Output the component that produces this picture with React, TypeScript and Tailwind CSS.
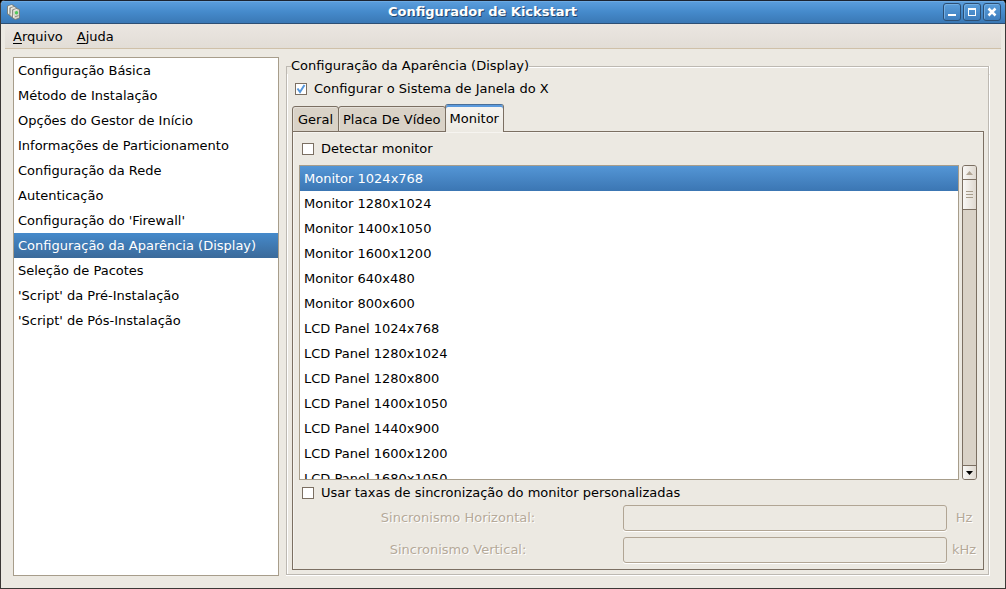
import { useState } from "react";
import type { ReactNode } from "react";

const sections = [
  "Configuração Básica",
  "Método de Instalação",
  "Opções do Gestor de Início",
  "Informações de Particionamento",
  "Configuração da Rede",
  "Autenticação",
  "Configuração do 'Firewall'",
  "Configuração da Aparência (Display)",
  "Seleção de Pacotes",
  "'Script' da Pré-Instalação",
  "'Script' de Pós-Instalação",
];

const monitors = [
  "Monitor 1024x768",
  "Monitor 1280x1024",
  "Monitor 1400x1050",
  "Monitor 1600x1200",
  "Monitor 640x480",
  "Monitor 800x600",
  "LCD Panel 1024x768",
  "LCD Panel 1280x1024",
  "LCD Panel 1280x800",
  "LCD Panel 1400x1050",
  "LCD Panel 1440x900",
  "LCD Panel 1600x1200",
  "LCD Panel 1680x1050",
];

function AppIcon() {
  return (
    <svg width="16" height="16" viewBox="0 0 16 16" className="shrink-0" aria-hidden="true">
      <g stroke="#75756c" strokeWidth="0.8" fill="#d6d6cc">
        <path d="M1.5 2l4.5-1.3 2 1v8.5l-4 1.3-2.5-1.5z" />
        <path d="M4 4l4.5-1.3 2 1v8.5L6.500 13.500 4 12z" />
        <path d="M6.500 6l4.500-1.500 2.500 1v8.500l-4.200 1.500L6.500 14z" />
      </g>
      <path d="M2.500 2.800v6.500M5 5v6M7.500 7v6M2.500 2.500L6 1.500M5 4.500l3.500-1M7.500 6.500l3.500-1" stroke="#f6f6ee" strokeWidth="0.9" />
      <path d="M4.500 3.500v6M7 5.500v6" stroke="#9a9a90" strokeWidth="0.7" />
      <circle cx="10.500" cy="8.800" r="1.700" fill="#52c85a" />
      <path d="M9 12.800l3.500-1.200" stroke="#8c8c82" />
    </svg>
  );
}

function TitleButton({ label, children }: { label: string; children: ReactNode }) {
  return (
    <button
      type="button"
      aria-label={label}
      className="flex size-[18px] items-center justify-center rounded-[3px] border border-[#2d4f74] bg-linear-to-b from-[#5b9edb] to-[#3d7dbd] shadow-[inset_1px_1px_0_#72aee4]"
    >
      <svg width="10" height="10" viewBox="0 0 10 10" fill="none" stroke="#fff" strokeWidth="2">
        {children}
      </svg>
    </button>
  );
}

function Check({
  id,
  label,
  checked,
  onChange,
}: {
  id: string;
  label: string;
  checked: boolean;
  onChange: (value: boolean) => void;
}) {
  return (
    <div className="flex items-center gap-[7px]">
      <span className="grid size-[12px]">
        <input
          id={id}
          type="checkbox"
          checked={checked}
          onChange={(e) => onChange(e.target.checked)}
          className="col-start-1 row-start-1 size-[12px] appearance-none border border-[#7b6f62] bg-white"
        />
        {checked && (
          <svg
            viewBox="0 0 12 12"
            className="pointer-events-none col-start-1 row-start-1 size-[12px]"
            fill="none"
            stroke="#5697db"
            strokeWidth="2"
          >
            <path d="M2.5 5.5l2.5 3.5 4.5-7" />
          </svg>
        )}
      </span>
      <label htmlFor={id}>{label}</label>
    </div>
  );
}

function RateRow({ id, label, unit }: { id: string; label: string; unit: string }) {
  return (
    <div className="flex h-[26px] items-center text-[#b5a999] [text-shadow:1px_1px_0_#fff]">
      <label htmlFor={id} className="flex-1 text-center">
        {label}
      </label>
      <input
        id={id}
        type="text"
        disabled
        className="ml-[6px] h-full w-[324px] rounded-[3px] border border-[#b1a594] bg-[#ece9e2] px-1 shadow-[0_1px_0_#fff]"
      />
      <span className="ml-[4px] w-[26px] text-center">{unit}</span>
    </div>
  );
}

export default function App() {
  const [section, setSection] = useState(sections[7]);
  const [monitor, setMonitor] = useState(monitors[0]);
  const [tab, setTab] = useState("Monitor");
  const [useX, setUseX] = useState(true);
  const [probe, setProbe] = useState(false);
  const [custom, setCustom] = useState(false);

  return (
    <div className="h-screen bg-black font-['DejaVu_Sans',sans-serif] text-[13px] leading-[16px] text-black">
      <div className="flex h-full flex-col overflow-hidden rounded-t-[5px] border border-t-0 border-[#3c3836] bg-[#ece9e2]">
        <header className="flex h-[24px] shrink-0 items-center border-t border-b border-t-[#1b2330] border-b-[#2d4f74] bg-linear-to-b from-[#5b9edd] via-[#458acb] to-[#3a78b5] pr-[4px] pl-[5px] shadow-[inset_0_1px_0_#6ca9e2]">
          <AppIcon />
          <h1 className="flex-1 text-center leading-[18px] font-bold text-white [text-shadow:1px_1px_0_#24476c]">
            Configurador de Kickstart
          </h1>
          <div className="flex gap-[2px]">
            <TitleButton label="Minimizar">
              <path d="M1 8h8" />
            </TitleButton>
            <TitleButton label="Maximizar">
              <path d="M1 2h8" />
              <path d="M1.5 1v8M8.5 1v8M1 8.5h8" strokeWidth="1" />
            </TitleButton>
            <TitleButton label="Fechar">
              <path d="M1.5 1.5l7 7M8.5 1.5l-7 7" strokeWidth="2.5" />
            </TitleButton>
          </div>
        </header>

        <nav className="mx-[4px] flex h-[25px] shrink-0 items-center gap-[14px] border-b border-[#cfc0a8] bg-linear-to-b from-[#ebe6e1] to-[#e2ddd6] px-[8px] pt-[2px]">
          <button type="button">
            <span className="underline underline-offset-2">A</span>rquivo
          </button>
          <button type="button">
            <span className="underline underline-offset-2">A</span>juda
          </button>
        </nav>

        <div className="flex min-h-0 flex-1 gap-[7px] pt-[8px] pr-[16px] pb-[12px] pl-[12px]">
          <ul className="w-[266px] shrink-0 border border-[#a79d8b] bg-white">
            {sections.map((name) => (
              <li key={name}>
                <button
                  type="button"
                  onClick={() => setSection(name)}
                  className={
                    "block h-[25px] w-full px-[4px] text-left whitespace-nowrap " +
                    (name === section ? "bg-linear-to-b from-[#458acb] to-[#3b6a9a] text-white" : "")
                  }
                >
                  {name}
                </button>
              </li>
            ))}
          </ul>

          <fieldset className="mb-px flex min-w-0 flex-1 flex-col">
            <div className="flex h-[17px] shrink-0 items-end">
              <div className="h-[8px] w-[5px] border-t border-l border-[#bdb9b2]" />
              <div className="h-[16px]">Configuração da Aparência (Display)</div>
              <div className="h-[8px] flex-1 border-t border-r border-[#bdb9b2] shadow-[inset_0_1px_0_#fff,1px_0_0_#fff]" />
            </div>
            <div className="flex min-h-0 flex-1 flex-col border border-t-0 border-[#bdb9b2] pt-[7px] pr-[4px] pb-[4px] pl-[5px] shadow-[inset_1px_0_0_#fff,0_1px_0_#fff,1px_1px_0_#fff]">
              <div className="pl-[3px]">
                <Check id="use-x" label="Configurar o Sistema de Janela do X" checked={useX} onChange={setUseX} />
              </div>

              <div role="tablist" className="z-10 mt-[7px] -mb-px flex h-[28px] shrink-0 items-end">
                {["Geral", "Placa De Vídeo", "Monitor"].map((name) => (
                  <button
                    key={name}
                    type="button"
                    role="tab"
                    aria-selected={name === tab}
                    onClick={() => setTab(name)}
                    className={
                      name === tab
                        ? "h-[28px] rounded-t-[3px] border border-b-0 border-[#7b6f62] border-t-[#4a6f98] bg-linear-to-b from-[#f7f6f3] to-[#ece9e2] px-[4px] shadow-[inset_0_2px_0_#5b9add]"
                        : "-mr-px h-[26px] rounded-t-[3px] border border-[#7b6f62] bg-[#d9d2c7] px-[4px] pt-px first:px-[5px] shadow-[inset_1px_1px_0_#e5e0d8]"
                    }
                  >
                    {name}
                  </button>
                ))}
              </div>

              <div
                role="tabpanel"
                className="flex min-h-0 flex-1 flex-col border border-[#7b6f62] px-[6px] pt-[9px] pb-[6px] shadow-[inset_1px_1px_0_#f6f4f0]"
              >
                <div className="pl-[3px]">
                  <Check id="probe" label="Detectar monitor" checked={probe} onChange={setProbe} />
                </div>

                <div className="mt-[8px] flex min-h-0 flex-1 gap-[3px]">
                  <ul className="min-w-0 flex-1 overflow-hidden border border-[#a79d8b] bg-white">
                    {monitors.map((name) => (
                      <li key={name}>
                        <button
                          type="button"
                          onClick={() => setMonitor(name)}
                          className={
                            "block h-[25px] w-full px-[4px] text-left " +
                            (name === monitor ? "bg-linear-to-b from-[#5496d6] to-[#3b76b3] text-white" : "")
                          }
                        >
                          {name}
                        </button>
                      </li>
                    ))}
                  </ul>
                  <div className="flex w-[15px] flex-col overflow-hidden rounded-[3px] border border-[#7b6f62] bg-[#d9d2c7]">
                    <button
                      type="button"
                      aria-label="Subir"
                      className="flex h-[14px] shrink-0 items-center justify-center border-b border-[#7b6f62] bg-linear-to-r from-[#f9f8f6] to-[#dfd9d0]"
                    >
                      <svg width="7" height="4" viewBox="0 0 7 4">
                        <path d="M0 4L3.5 0 7 4z" fill="#b1a594" />
                      </svg>
                    </button>
                    <div className="flex h-[30px] shrink-0 flex-col items-center justify-center gap-[2px] border-b border-[#7b6f62] bg-linear-to-r from-[#f9f8f6] to-[#dfd9d0]">
                      <div className="h-px w-[7px] bg-[#a79d8b]" />
                      <div className="h-px w-[7px] bg-[#a79d8b]" />
                      <div className="h-px w-[7px] bg-[#a79d8b]" />
                    </div>
                    <button
                      type="button"
                      aria-label="Descer"
                      className="mt-auto flex h-[14px] shrink-0 items-center justify-center border-t border-[#7b6f62] bg-linear-to-r from-[#f9f8f6] to-[#dfd9d0]"
                    >
                      <svg width="7" height="4" viewBox="0 0 7 4">
                        <path d="M0 0h7L3.5 4z" fill="#000" />
                      </svg>
                    </button>
                  </div>
                </div>

                <div className="mt-[5px] pl-[3px]">
                  <Check
                    id="custom-rates"
                    label="Usar taxas de sincronização do monitor personalizadas"
                    checked={custom}
                    onChange={setCustom}
                  />
                </div>
                <div className="mt-[4px] flex flex-col gap-[6px]">
                  <RateRow id="hsync" label="Sincronismo Horizontal:" unit="Hz" />
                  <RateRow id="vsync" label="Sincronismo Vertical:" unit="kHz" />
                </div>
              </div>
            </div>
          </fieldset>
        </div>
      </div>
    </div>
  );
}
